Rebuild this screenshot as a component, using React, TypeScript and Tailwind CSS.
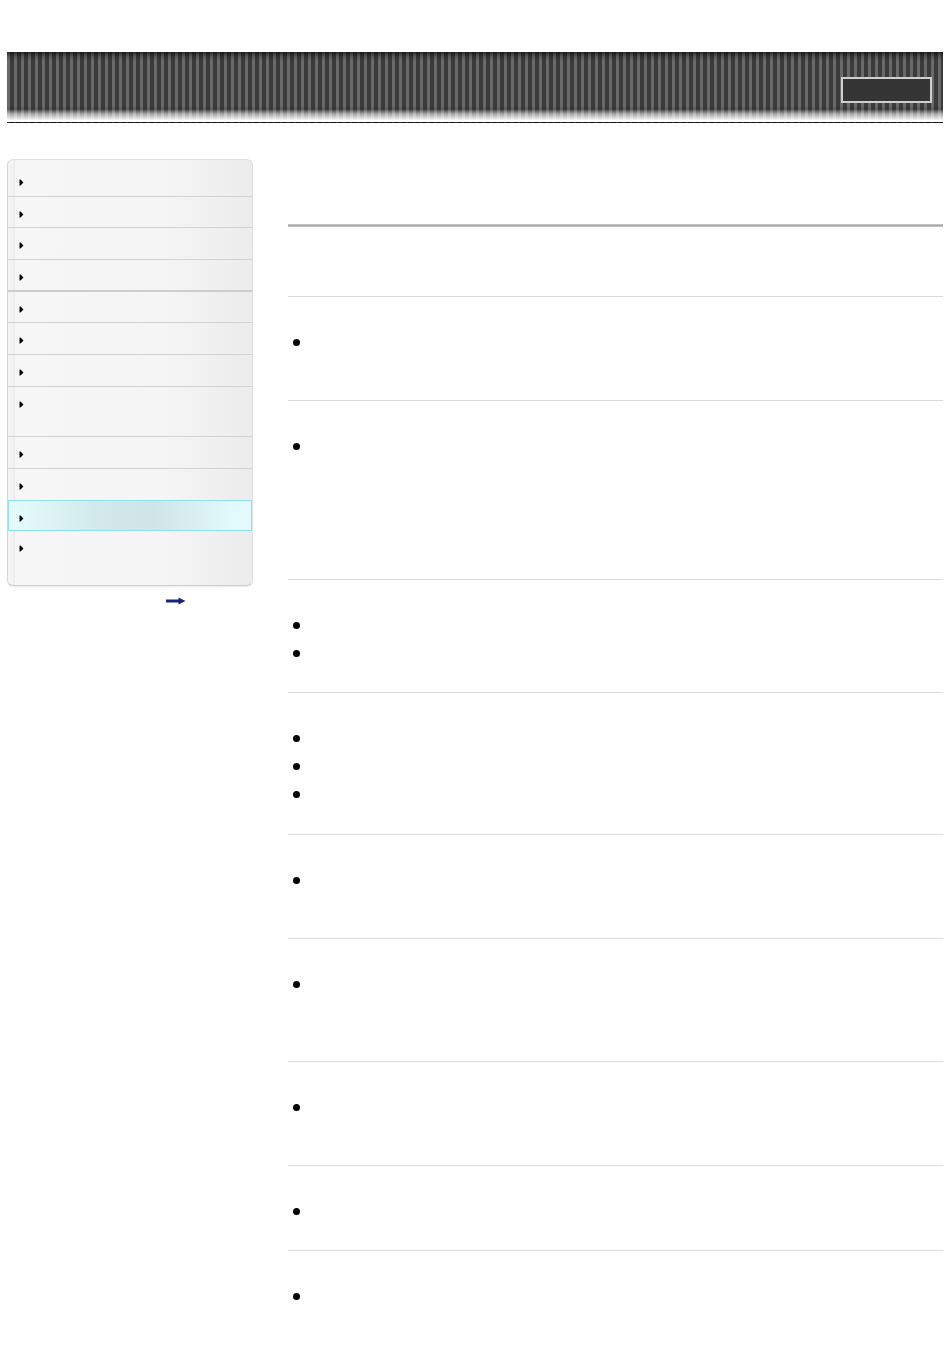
import React from "react";

type Row = { h: number; border: "thin" | "thick" | "none"; active?: boolean };

const rows: Row[] = [
  { h: 31, border: "thin" },
  { h: 30, border: "thin" },
  { h: 31, border: "thin" },
  { h: 30, border: "thick" },
  { h: 30, border: "thin" },
  { h: 31, border: "thin" },
  { h: 31, border: "thin" },
  { h: 49, border: "thin" },
  { h: 31, border: "thin" },
  { h: 31, border: "none" },
  { h: 29, border: "none", active: true },
  { h: 54, border: "none" },
];

const sections: number[][] = [
  [47],
  [122],
  [28, 28],
  [28, 28, 29],
  [47],
  [66],
  [47],
  [28],
  [40],
];

function NavArrow() {
  return (
    <svg width="5" height="7" viewBox="0 0 5 7" className="block">
      <path d="M0.5 0.5 L0.5 6.5 L1.5 6.5 L4.5 3.5 L1.5 0.5 Z" fill="#000" />
    </svg>
  );
}

function SideRow({ row }: { row: Row }) {
  const borderCls =
    row.border === "thin"
      ? "border-b border-[#d2d2d2]"
      : row.border === "thick"
      ? "border-b-2 border-[#cdcdcd]"
      : "";
  if (row.active) {
    return (
      <div
        className="border border-[#8fdff0] bg-[linear-gradient(90deg,#e6fcfc_0%,#d3eaec_35%,#cfe4e7_60%,#e2fafb_92%)] pl-[10px] pt-[14px]"
        style={{ height: row.h + 2 }}
      >
        <NavArrow />
      </div>
    );
  }
  return (
    <div
      className={`${borderCls} pl-[11px] pt-[14px]`}
      style={{ height: row.h + (row.border === "thick" ? 2 : row.border === "thin" ? 1 : 0) }}
    >
      <NavArrow />
    </div>
  );
}

export default function App() {
  return (
    <div className="min-h-[1354px] bg-white font-['Liberation_Sans',Arial,sans-serif]">
      <div className="pt-[52px] px-[7px]">
        {/* header */}
        <div className="w-[936px]">
          <div className="h-[68px] bg-[linear-gradient(180deg,rgba(0,0,0,0.6)_0px,rgba(0,0,0,0.15)_5px,rgba(0,0,0,0)_9px,rgba(0,0,0,0)_54px,rgba(0,0,0,0.15)_57px,rgba(255,255,255,0.55)_62px,rgba(255,255,255,0.95)_68px),repeating-linear-gradient(90deg,#6a6a6a_0px,#6a6a6a_3px,#3b3b3b_3px,#3b3b3b_7px)] flex justify-end items-start pt-[25px] pr-[11px]">
            <div className="w-[91px] h-[26px] border-2 border-[#cfcfcf] bg-[#353535]" />
          </div>
          <div className="h-[2px]" />
          <div className="h-[1px] bg-[repeating-linear-gradient(90deg,#3a3a3a_0px,#3a3a3a_2px,#111_2px,#111_7px)]" />
        </div>

        {/* body */}
        <div className="flex items-start mt-[36px] gap-[35px]">
          {/* sidebar */}
          <div className="w-[246px] shrink-0">
            <div className="rounded-[6px] border border-[#e0e0e0] border-b-[#cfcfcf] border-l-[#d6d6d6] bg-[linear-gradient(90deg,#f4f4f4_0px,#f4f4f4_5px,#ededed_5px,#ededed_7px,#f6f6f6_7px,#f5f5f5_65%,#ececec_100%)] pt-[5px] overflow-hidden shadow-[0_1px_1px_rgba(0,0,0,0.08)]">
              {rows.map((r, i) => (
                <SideRow key={i} row={r} />
              ))}
            </div>
            <div className="flex justify-start pl-[159px] pt-[11px]">
              <svg width="20" height="8" viewBox="0 0 20 8" className="block">
                <rect x="0" y="2.5" width="14" height="3" fill="#1a237e" />
                <path d="M12.5 0.5 L19.5 4 L12.5 7.5 Z" fill="#1a237e" />
              </svg>
            </div>
          </div>

          {/* main */}
          <div className="w-[655px]">
            <div className="h-[65px]" />
            <div className="h-[3px] bg-[linear-gradient(180deg,#cfcfcf_0%,#a9a9a9_50%,#cfcfcf_100%)]" />
            <div className="h-[69px]" />
            {sections.map((items, si) => (
              <div key={si} className="border-t border-[#dadada] pt-[31px] pb-[25px]">
                {items.map((h, ii) => (
                  <div key={ii} className="flex items-start pl-[5px]" style={{ height: h }}>
                    <div className="h-[28px] flex items-center">
                      <div className="w-[7px] h-[7px] rounded-full bg-black" />
                    </div>
                  </div>
                ))}
              </div>
            ))}
          </div>
        </div>
      </div>
    </div>
  );
}
